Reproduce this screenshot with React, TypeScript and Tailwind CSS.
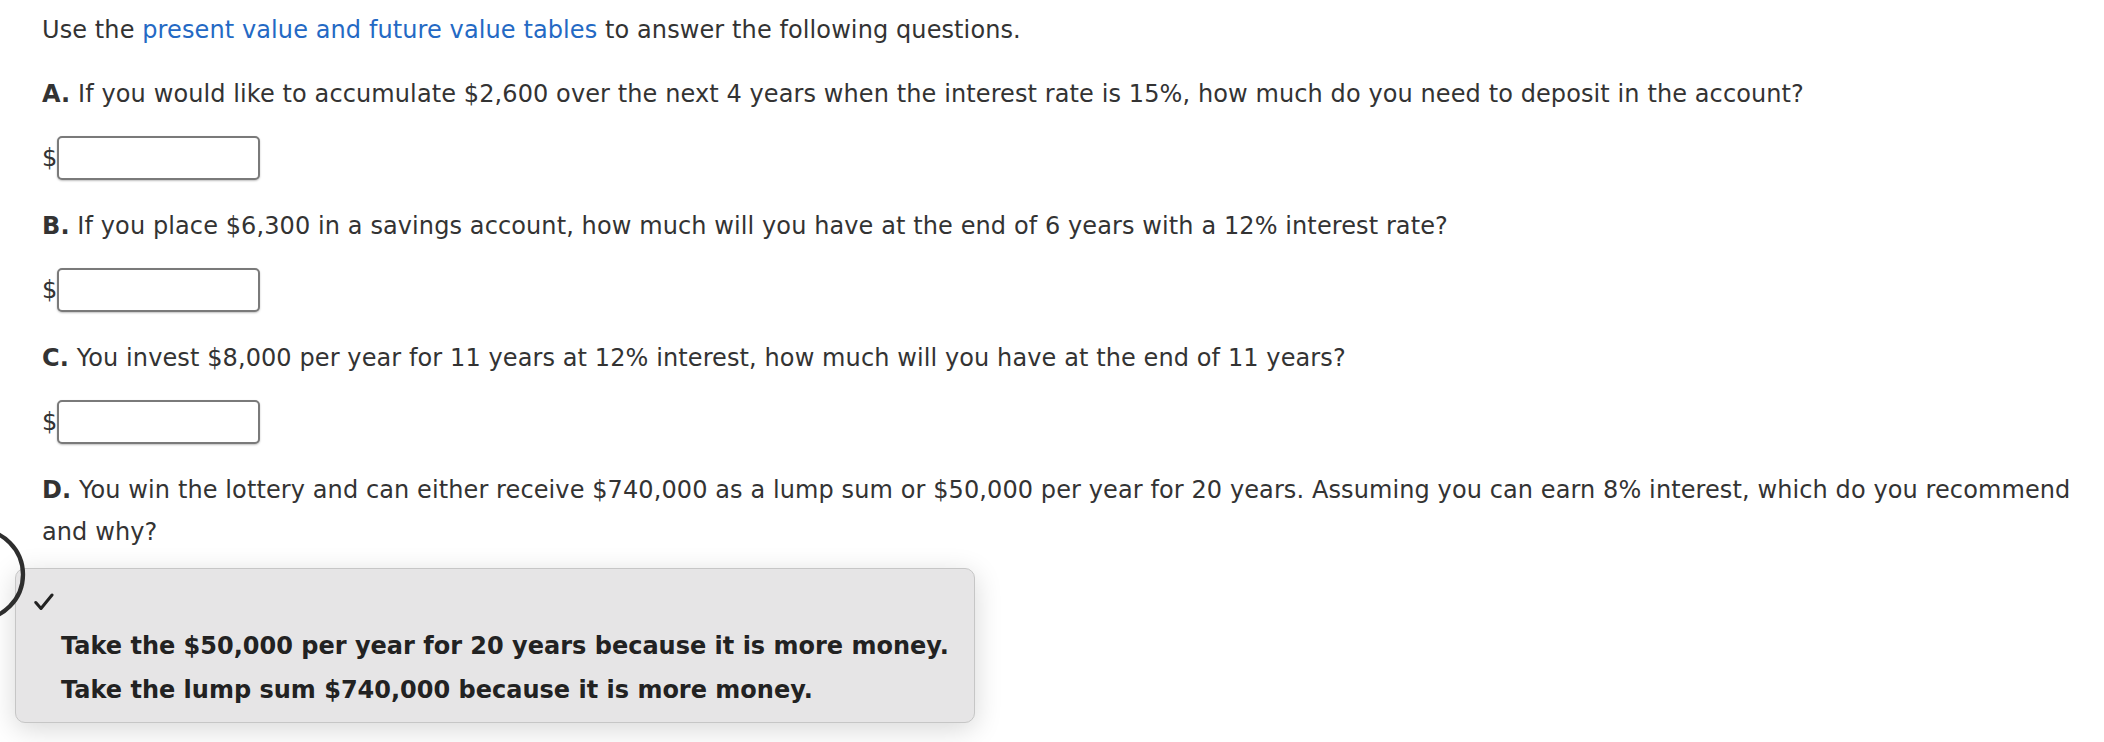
import React from "react";

const questions = [
  {
    label: "A.",
    text: "If you would like to accumulate $2,600 over the next 4 years when the interest rate is 15%, how much do you need to deposit in the account?",
  },
  {
    label: "B.",
    text: "If you place $6,300 in a savings account, how much will you have at the end of 6 years with a 12% interest rate?",
  },
  {
    label: "C.",
    text: "You invest $8,000 per year for 11 years at 12% interest, how much will you have at the end of 11 years?",
  },
];

const options = [
  "Take the $50,000 per year for 20 years because it is more money.",
  "Take the lump sum $740,000 because it is more money.",
];

function DollarInput() {
  return (
    <div className="mt-[21px] flex items-center">
      <span className="w-[15px]">$</span>
      <div className="h-[44px] w-[203px] rounded-[5px] border-2 border-[#7a7a7a] bg-white shadow-[0_1px_2px_rgba(0,0,0,0.25)]" />
    </div>
  );
}

export default function App() {
  return (
    <div className="relative min-h-[742px] overflow-hidden bg-white font-['DejaVu_Sans','Verdana',sans-serif] text-[24px] leading-[42px] tracking-[0.1px] text-[#333333]">
      <div className="pl-[42px] pr-[20px] pt-[9px]">
        <p>
          Use the <span className="text-[#2469c4]">present value and future value tables</span> to answer the following
          questions.
        </p>

        {questions.map((q, i) => (
          <div key={q.label}>
            <p className={i === 0 ? "mt-[22px]" : "mt-[25px]"}>
              <b className="font-bold">{q.label}</b> {q.text}
            </p>
            <DollarInput />
          </div>
        ))}

        <p className="mt-[25px]">
          <b className="font-bold">D.</b> You win the lottery and can either receive $740,000 as a lump sum or $50,000
          per year for 20 years. Assuming you can earn 8% interest, which do you recommend and why?
        </p>

        <div className="-ml-[27px] mt-[15px] w-[960px] rounded-[10px] border border-[#c6c6c6] bg-[#e6e5e6] pb-[10px] pt-[11px] shadow-[0_6px_28px_rgba(0,0,0,0.16)]">
          <div className="flex h-[44px] items-center pl-[18px]">
            <svg width="20" height="18" viewBox="0 0 20 18" fill="none" stroke="#222222" strokeWidth="3" strokeLinecap="round" strokeLinejoin="round">
              <polyline points="1.8 9.5 7 15.5 18 2" />
            </svg>
          </div>
          {options.map((o) => (
            <div key={o} className="flex h-[44px] items-center pl-[45px] font-bold tracking-normal text-[#222222]">
              {o}
            </div>
          ))}
        </div>
      </div>

      <svg className="pointer-events-none absolute left-0 top-[520px]" width="40" height="110" viewBox="0 0 40 110">
        <circle cx="-22" cy="54.5" r="45" fill="none" stroke="#2e2e2e" strokeWidth="4.3" />
      </svg>
    </div>
  );
}
